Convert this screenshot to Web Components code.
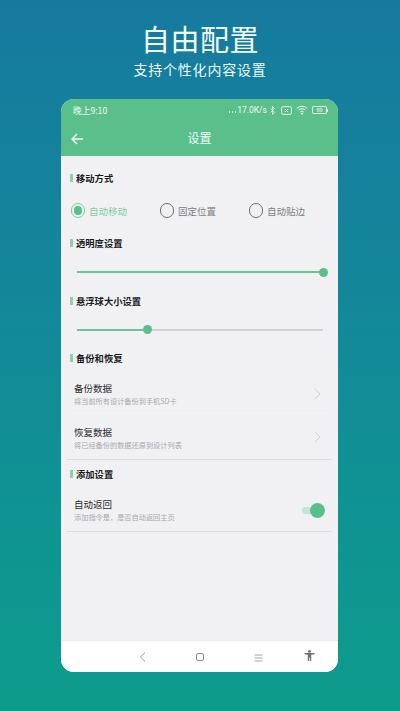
<!DOCTYPE html>
<html lang="zh"><head><meta charset="utf-8"><style>
html,body{margin:0;height:711px;overflow:hidden}
body{font-family:"Noto Sans CJK SC","Roboto",sans-serif}
</style></head><body>
<promo-screen>
<section-title style="margin-top:12px">移动方式</section-title>
<radio-row></radio-row>
<section-title>透明度设置</section-title>
<range-slider value="100" style="height:38px"></range-slider>
<section-title>悬浮球大小设置</section-title>
<range-slider value="28.5" style="height:37px"></range-slider>
<section-title>备份和恢复</section-title>
<setting-row label="备份数据" sub="将当前所有设计备份到手机SD卡" chevron soft style="height:43px;--top:14px"></setting-row>
<setting-row label="恢复数据" sub="将已经备份的数据还原到设计列表" chevron divider style="height:49px;--top:15px"></setting-row>
<section-title style="margin-top:4px">添加设置</section-title>
<setting-row label="自动返回" sub="添加指令是，是否自动返回主页" toggle divider style="height:48px;--top:14px"></setting-row>
</promo-screen>
<script>
const def=(n,css,html,init)=>customElements.define(n,class extends HTMLElement{
  connectedCallback(){ if(this.shadowRoot)return; const s=this.attachShadow({mode:'open'});
    s.innerHTML='<style>'+css+'</style>'+(typeof html==='function'?html(this):html); init&&init(this,s);}
});
def('promo-screen',`
:host{display:flex;flex-direction:column;align-items:center;width:400px;height:711px;box-sizing:border-box;
 background:linear-gradient(180deg,#167a9f 0%,#14859b 35%,#0f9492 75%,#0d9c8c 100%);color:#fff}
h1{margin:0;padding-top:18px;height:40px;line-height:40px;font-size:29px;font-weight:400;letter-spacing:.5px;text-align:center;color:#f4fffd}
p{margin:0;padding-top:1px;height:20px;line-height:20px;font-size:14px;letter-spacing:.8px;text-align:center;color:#ecfbfb}
.phone{margin-top:20px;margin-left:-1px;width:277px;height:573px;border-radius:13px;overflow:hidden;background:#f1f1f4;display:flex;flex-direction:column}
.main{flex:1;display:flex;flex-direction:column;min-height:0}
`,`<h1>自由配置</h1><p>支持个性化内容设置</p>
<div class="phone"><status-bar></status-bar><app-bar></app-bar><div class="main"><slot></slot></div><nav-bar></nav-bar></div>`);
def('status-bar',`
:host{display:flex;align-items:center;height:22px;padding:0 10px 0 12px;background:#5bbf8c;color:#eef9f3;font-size:8.5px;font-family:"Roboto","Noto Sans CJK SC",sans-serif;flex:none}
.t{font-size:8.7px;flex:1;font-family:"Noto Sans CJK SC",sans-serif}
.r{display:flex;align-items:center;gap:3px}
.d{display:inline-flex;gap:1.5px;align-items:flex-end;margin-right:-2px;padding-top:4px}
.d i{display:block;width:1.5px;height:1.5px;border-radius:50%;background:#eef9f3}
svg{display:block}
`,`<span class="t">晚上9:10</span><span class="r"><span class="d"><i></i><i></i><i></i></span><span>17.0K/s</span>
<svg width="5" height="9" viewBox="0 0 5 9" fill="none" stroke="#eef9f3" stroke-width=".8"><path d="M.5 2.5l4 4-2 2V.5l2 2-4 4"/></svg>
<svg width="11" height="9" viewBox="0 0 10 8" style="margin-left:3px" fill="none" stroke="#eef9f3" stroke-width=".8"><rect x=".5" y=".5" width="9" height="7" rx="1.5"/><path d="M3.7 2.7l2.6 2.6M6.3 2.7L3.7 5.3"/></svg>
<svg width="12" height="10" viewBox="0 0 11 9" style="margin-left:1px" fill="none" stroke="#eef9f3" stroke-width=".9"><path d="M.7 3a7 7 0 0 1 9.6 0M2.3 4.6a4.6 4.6 0 0 1 6.4 0M3.9 6.2a2.3 2.3 0 0 1 3.2 0"/><circle cx="5.5" cy="7.8" r=".6" fill="#eef9f3"/></svg>
<span style="display:inline-flex;align-items:center;margin-left:1px"><span style="box-sizing:border-box;width:15px;height:8px;border:.8px solid #eef9f3;border-radius:1.5px;font-size:5.5px;line-height:6.5px;text-align:center">89</span><span style="width:1px;height:3px;background:#eef9f3"></span></span></span>`);
def('app-bar',`
:host{display:grid;grid-template-columns:1fr auto 1fr;align-items:center;height:35px;background:#5bbf8c;color:#f2fbf6;font-size:12px;flex:none}
svg{display:block;margin-left:10px}
span{transform:translateY(-1px)}
`,`<svg width="12" height="12" viewBox="0 0 12 12" fill="none" stroke="#f4fbf7" stroke-width="1.5"><path d="M12 6H1.2M6 1L1.1 6 6 11"/></svg><span>设置</span><i></i>`);
def('section-title',`
:host{display:flex;align-items:center;gap:3px;height:20px;padding-left:9px;font-size:9.3px;font-weight:700;color:#1a1a1c;flex:none}
i{display:block;width:3px;height:8px;background:#8ed0ae}
`,`<i></i><slot></slot>`);
def('radio-row',`
:host{display:grid;grid-template-columns:89px 89px 1fr;align-items:center;height:45px;padding-left:9.5px;font-size:9.5px;color:#7d7d81;flex:none}
div{display:flex;align-items:center;gap:4px}
b{box-sizing:border-box;width:14.5px;height:14.5px;border:1.4px solid #6e6e72;border-radius:50%;display:block;flex:none}
.on{color:#7fcaa4}
.on b{border-color:#7fcaa4;padding:2.2px;background:#5bbf8c content-box}
`,`<div class="on"><b></b>自动移动</div><div><b></b>固定位置</div><div><b></b>自动贴边</div>`);
def('range-slider',`
:host{display:flex;align-items:center;padding:0 15px 0 16px;flex:none}
.t{flex:1;height:2px;background:#d2d2d4;position:relative}
.f{height:100%;background:#6cc498}
.k{position:absolute;top:50%;width:9px;height:9px;margin:-4.5px 0 0 -4.5px;border-radius:50%;background:#5bbf8c}
`,h=>{const v=h.getAttribute('value');return `<div class="t"><div class="f" style="width:${v}%"></div><div class="k" style="left:${v}%"></div></div>`});
def('setting-row',`
:host{display:flex;align-items:flex-start;box-sizing:border-box;margin:0 6px;padding:0 7px 0 7px;flex:none}
:host([divider]){border-bottom:1px solid #dcdcde}
:host([soft]){border-bottom:1px solid #eeeef0}
.x{flex:1;display:flex;flex-direction:column;padding-top:var(--top,14px)}
.l{font-size:9.5px;line-height:13px;color:#2a2a2c}
.s{font-size:7.2px;line-height:12px;color:#a8a8ac;white-space:nowrap}
svg{display:block;margin:20px 4px 0 0}
.sw{position:relative;width:23px;height:15px;margin-top:18.5px}
.sw i{position:absolute;left:0;top:4px;width:18px;height:7px;border-radius:4px;background:#c4e5d3}
.sw b{position:absolute;right:0;top:0;width:15px;height:15px;border-radius:50%;background:#5bbf8c}
`,h=>`<div class="x"><div class="l">${h.getAttribute('label')}</div><div class="s">${h.getAttribute('sub')}</div></div>`+
 (h.hasAttribute('chevron')?`<svg width="7" height="12" viewBox="0 0 7 12" fill="none" stroke="#cfcfd2" stroke-width="1"><path d="M.7 .8L6 6 .7 11.2"/></svg>`:'')+
 (h.hasAttribute('toggle')?`<div class="sw"><i></i><b></b></div>`:''));
def('nav-bar',`
:host{display:block;height:31px;background:#fff;border-top:1px solid #ececee;flex:none}
.g{display:grid;grid-template-columns:58px 58px 58px 44px;justify-items:center;align-items:center;height:100%;padding-left:52px}
svg{display:block}
`,`<div class="g">
<svg width="7" height="10" viewBox="0 0 7 10" fill="none" stroke="#9a9a9c" stroke-width="1"><path d="M6 .6L1.4 5 6 9.4"/></svg>
<svg width="8" height="8" viewBox="0 0 8 8" fill="none" stroke="#8a8a8c" stroke-width="1"><rect x=".5" y=".5" width="7" height="7" rx="1.5"/></svg>
<svg width="9" height="8" viewBox="0 0 9 8" fill="none" stroke="#a5a5a7" stroke-width="1" style="margin-top:2px"><path d="M.5 1h8M.5 4h8M.5 7h8"/></svg>
<svg width="11" height="11" viewBox="0 0 11 11" fill="#6f6f71" style="margin-top:-2px"><circle cx="5.5" cy="1.4" r="1.4"/><path d="M.5 3h10v1.2L7.2 4.7V11H5.9V7.5H5.1V11H3.8V4.7L.5 4.2z"/></svg>
</div>`);
</script>
</body></html>
